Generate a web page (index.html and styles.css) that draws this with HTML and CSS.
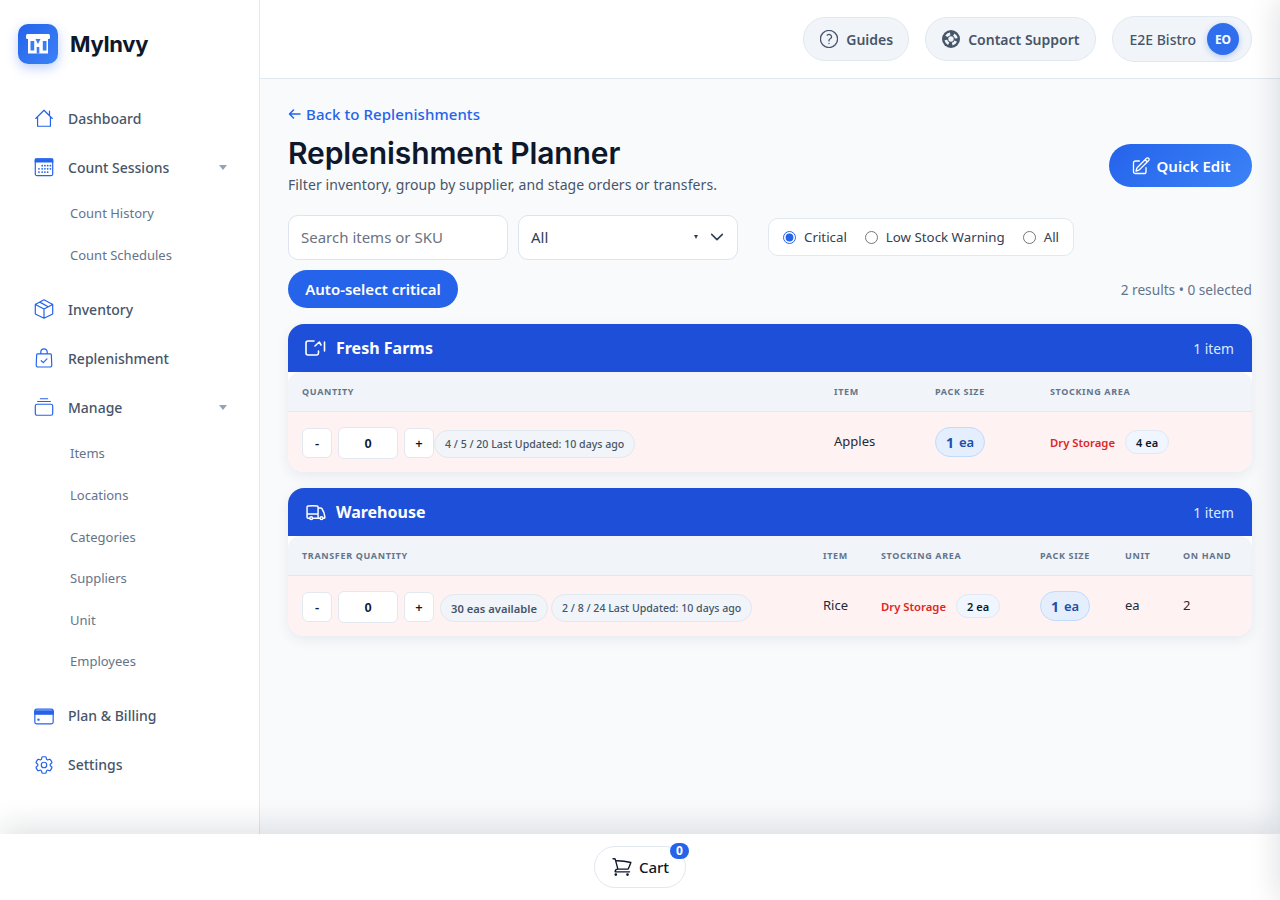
FILE: index.html
```html
<!DOCTYPE html>
<html lang="en">
<head>
  <meta charset="UTF-8">
  <meta name="viewport" content="width=device-width, initial-scale=1.0">
  <title>Replenishment Planner - MyInvy</title>
  <link rel="stylesheet" href="styles.css">
</head>
<body>
  <div class="app">
    <aside class="sidebar">
      <div class="brand">
        <div class="brand-logo">
          <svg width="26" height="22" viewBox="0 0 26 22">
            <rect x="1" y="1" width="24" height="5" rx="1.500" fill="#fff"/>
            <path d="M3 5h20v15.500H3z" fill="#fff"/>
            <path d="M5.500 8h3.700v9.500H5.500zM17.800 8h3.700v9.500h-3.700zM10.500 6h5L13 11zM11.700 14h2.600v6.500h-2.600z" fill="#3b7cf5"/>
          </svg>
        </div>
        <span class="brand-name">MyInvy</span>
      </div>

      <nav class="nav">
        <a class="nav-item">
          <svg class="nav-icon" viewBox="0 0 24 24"><path d="M3 12.500 12 3.500l9 9M5 10.500V21h14V10.500M18 4.500v5"/></svg>
          Dashboard
        </a>
        <a class="nav-item">
          <svg class="nav-icon" viewBox="0 0 24 24">
            <rect x="2.500" y="3" width="19" height="18.500" rx="2"/>
            <path d="M2.500 3.500h19v3h-19z" fill="#2563eb"/>
            <path class="dots" d="M10 10.500h.01M13 10.500h.01M16 10.500h.01M19 10.500h.01M6.500 14h.01M10 14h.01M13 14h.01M16 14h.01M19 14h.01M6.500 17.500h.01M10 17.500h.01M13 17.500h.01M16 17.500h.01"/>
          </svg>
          Count Sessions
          <span class="caret"></span>
        </a>
        <div class="subnav">
          <a class="sub-item">Count History</a>
          <a class="sub-item">Count Schedules</a>
        </div>
        <a class="nav-item">
          <svg class="nav-icon" viewBox="0 0 24 24"><path d="m21.500 7-9.500-5L2.500 7m19 0-9.500 5m9.500-5v10.500l-9.500 4.500m-9.500-15 9.500 5m-9.500-5v10.500l9.500 4.500m0-10v10M7.500 4.500l9 5"/></svg>
          Inventory
        </a>
        <a class="nav-item">
          <svg class="nav-icon" viewBox="0 0 24 24"><path d="M8.500 7.500V5.500a3.500 3.500 0 0 1 7 0v2M5 7.500h14a1 1 0 0 1 1 1l.5 11.500a1.800 1.800 0 0 1-1.800 1.800H5.300A1.800 1.800 0 0 1 3.500 20L4 8.500a1 1 0 0 1 1-1ZM9 15l2.200 2 4-4"/></svg>
          Replenishment
        </a>
        <a class="nav-item">
          <svg class="nav-icon" viewBox="0 0 24 24"><rect x="2.500" y="9" width="19" height="12" rx="2"/><path d="M5 6h14M8 3h8"/></svg>
          Manage
          <span class="caret"></span>
        </a>
        <div class="subnav">
          <a class="sub-item">Items</a>
          <a class="sub-item">Locations</a>
          <a class="sub-item">Categories</a>
          <a class="sub-item">Suppliers</a>
          <a class="sub-item">Unit</a>
          <a class="sub-item">Employees</a>
        </div>
        <a class="nav-item">
          <svg class="nav-icon" viewBox="0 0 24 24">
            <rect x="2" y="4.500" width="20" height="16" rx="2"/>
            <path d="M2 6.500h20v3.500H2z" fill="#2563eb"/>
            <circle cx="6" cy="16" r="1.300" fill="#2563eb" stroke="none"/>
          </svg>
          Plan &amp; Billing
        </a>
        <a class="nav-item">
          <svg class="nav-icon" viewBox="0 0 24 24"><path d="M9.594 3.940c.09-.542.56-.94 1.110-.94h2.593c.55 0 1.020.398 1.110.94l.213 1.281c.063.374.313.686.645.870.074.040.147.083.22.127.325.196.72.257 1.075.124l1.217-.456a1.125 1.125 0 0 1 1.370.49l1.296 2.247a1.125 1.125 0 0 1-.26 1.431l-1.003.827c-.293.241-.438.613-.43.992a7.723 7.723 0 0 1 0 .255c-.008.378.137.75.43.991l1.004.827c.424.35.534.955.26 1.430l-1.298 2.247a1.125 1.125 0 0 1-1.369.491l-1.217-.456c-.355-.133-.75-.072-1.076.124a6.470 6.470 0 0 1-.22.128c-.331.183-.581.495-.644.869l-.213 1.281c-.09.543-.56.94-1.110.94h-2.594c-.55 0-1.019-.398-1.110-.94l-.213-1.281c-.062-.374-.312-.686-.644-.87a6.520 6.520 0 0 1-.22-.127c-.325-.196-.72-.257-1.076-.124l-1.217.456a1.125 1.125 0 0 1-1.369-.49l-1.297-2.247a1.125 1.125 0 0 1 .26-1.431l1.004-.827c.292-.24.437-.613.43-.991a6.932 6.932 0 0 1 0-.255c.007-.38-.138-.751-.43-.992l-1.004-.827a1.125 1.125 0 0 1-.26-1.430l1.297-2.247a1.125 1.125 0 0 1 1.370-.491l1.216.456c.356.133.751.072 1.076-.124.072-.044.146-.086.22-.128.332-.183.582-.495.644-.869l.214-1.280Z"/><path d="M15 12a3 3 0 1 1-6 0 3 3 0 0 1 6 0Z"/></svg>
          Settings
        </a>
      </nav>
    </aside>

    <div class="content">
      <header class="topbar">
        <button class="top-btn guides-btn">
          <svg class="top-icon" viewBox="1.500 1.500 21 21"><path d="M9.879 7.519c1.171-1.025 3.071-1.025 4.242 0 1.172 1.025 1.172 2.687 0 3.712-.203.179-.43.326-.67.442-.745.361-1.450.999-1.450 1.827v.75M22 12a10 10 0 1 1-20 0 10 10 0 0 1 20 0Zm-10 5.250h.008v.008H12v-.008Z"/></svg>
          Guides
        </button>
        <button class="top-btn">
          <svg class="top-icon" viewBox="0 0 24 24">
            <circle cx="12" cy="12" r="12" fill="#475569" stroke="none"/>
            <circle cx="12" cy="12" r="3.600" fill="#f1f5f9" stroke="none"/>
            <circle class="buoy" cx="12" cy="12" r="7"/>
          </svg>
          Contact Support
        </button>
        <div class="account">
          <span>E2E Bistro</span>
          <span class="avatar">EO</span>
        </div>
      </header>

      <main class="main">
        <a class="back-link">
          <svg width="13" height="12" viewBox="0 0 13 12"><path d="M12 6H1.500M5.500 2l-4 4 4 4"/></svg>
          Back to Replenishments
        </a>
        <div class="page-head">
          <div>
            <h1>Replenishment Planner</h1>
            <p class="page-sub">Filter inventory, group by supplier, and stage orders or transfers.</p>
          </div>
          <button class="quick-edit">
            <svg width="20" height="20" viewBox="0 0 24 24" class="stroke-white"><path d="m16.862 4.487 1.687-1.688a1.875 1.875 0 1 1 2.652 2.652L10.582 16.070a4.500 4.500 0 0 1-1.897 1.130L6 18l.8-2.685a4.500 4.500 0 0 1 1.130-1.897l8.932-8.931Zm0 0L19.500 7.125M18 14v4.750A2.250 2.250 0 0 1 15.750 21H5.250A2.250 2.250 0 0 1 3 18.750V8.250A2.250 2.250 0 0 1 5.250 6H10"/></svg>
            Quick Edit
          </button>
        </div>

        <div class="filters">
          <input class="search" type="text" placeholder="Search items or SKU">
          <div class="select">
            <span>All</span>
            <span class="select-arrows">
              <span class="mini-arrow"></span>
              <svg width="16" height="16" viewBox="0 0 24 24"><path d="m4 8 8 8 8-8"/></svg>
            </span>
          </div>
          <div class="radios">
            <label><input type="radio" name="level" checked> Critical</label>
            <label><input type="radio" name="level"> Low Stock Warning</label>
            <label><input type="radio" name="level"> All</label>
          </div>
        </div>

        <div class="actions">
          <button class="auto-select">Auto-select critical</button>
          <span class="results">2 results &bull; 0 selected</span>
        </div>

        <section class="group">
          <div class="group-head">
            <div class="group-title">
              <svg width="22" height="18" viewBox="0 0 22 18" class="stroke-white"><path d="M9 2H3a2 2 0 0 0-2 2v10a2 2 0 0 0 2 2h9a2 2 0 0 0 1.500-2v-2M10 7l4.300-4 1.700 3M19.500 3v9"/></svg>
              Fresh Farms
            </div>
            <span class="group-count">1 item</span>
          </div>
          <div class="thead cols-supplier">
            <span>Quantity</span>
            <span>Item</span>
            <span>Pack Size</span>
            <span>Stocking Area</span>
          </div>
          <div class="row cols-supplier">
            <div class="qty">
              <button class="qty-btn">-</button>
              <input class="qty-input" type="text" value="0">
              <button class="qty-btn">+</button>
              <span class="chip">4 / 5 / 20 Last Updated: 10 days ago</span>
            </div>
            <div class="cell-text">Apples</div>
            <div><span class="pack"><b>1</b> ea</span></div>
            <div class="area">
              <span class="area-name">Dry Storage</span>
              <span class="area-qty">4 ea</span>
            </div>
          </div>
        </section>

        <section class="group">
          <div class="group-head">
            <div class="group-title">
              <svg width="22" height="22" viewBox="0 0 24 24" class="stroke-white"><path d="M8.250 18.750a1.500 1.500 0 0 1-3 0m3 0a1.500 1.500 0 0 0-3 0m3 0h6m-9 0H3.375a1.125 1.125 0 0 1-1.125-1.125V14.250m17.250 4.500a1.500 1.500 0 0 1-3 0m3 0a1.500 1.500 0 0 0-3 0m3 0h1.125c.621 0 1.129-.504 1.090-1.124a17.902 17.902 0 0 0-3.213-9.193 2.056 2.056 0 0 0-1.580-.86H14.250M16.500 18.750h-2.250m0-11.177v-.958c0-.568-.422-1.048-.987-1.106a48.554 48.554 0 0 0-10.026 0 1.106 1.106 0 0 0-.987 1.106v7.635m12-6.677v6.677m0 4.500v-4.500m0 0h-12"/></svg>
              Warehouse
            </div>
            <span class="group-count">1 item</span>
          </div>
          <div class="thead cols-transfer">
            <span>Transfer Quantity</span>
            <span>Item</span>
            <span>Stocking Area</span>
            <span>Pack Size</span>
            <span>Unit</span>
            <span>On Hand</span>
          </div>
          <div class="row cols-transfer">
            <div class="qty">
              <button class="qty-btn">-</button>
              <input class="qty-input" type="text" value="0">
              <button class="qty-btn">+</button>
              <span class="chip chip-first">30 eas available</span>
              <span class="chip">2 / 8 / 24 Last Updated: 10 days ago</span>
            </div>
            <div class="cell-text">Rice</div>
            <div class="area">
              <span class="area-name">Dry Storage</span>
              <span class="area-qty">2 ea</span>
            </div>
            <div><span class="pack"><b>1</b> ea</span></div>
            <div class="cell-text">ea</div>
            <div class="cell-text">2</div>
          </div>
        </section>
      </main>
    </div>
  </div>

  <footer class="cart-bar">
    <button class="cart">
      <svg width="24" height="24" viewBox="0 0 24 24"><path d="M2.250 3h1.386c.51 0 .955.343 1.087.835l.383 1.437M7.500 14.250a3 3 0 0 0-3 3h15.750m-12.750-3h11.218c1.121-2.300 2.100-4.684 2.924-7.138a60.114 60.114 0 0 0-16.536-1.840M7.500 14.250 5.106 5.272M6 20.250a.75.75 0 1 1-1.500 0 .75.75 0 0 1 1.500 0Zm12.750 0a.75.75 0 1 1-1.500 0 .75.75 0 0 1 1.500 0Z"/></svg>
      Cart
      <span class="cart-badge">0</span>
    </button>
  </footer>

  <div class="drawer"></div>
</body>
</html>
```

FILE: styles.css
```css
* {
  margin: 0;
  padding: 0;
  box-sizing: border-box;
}

body {
  font-family: "Noto Sans", "Open Sans", sans-serif;
  background: #f8fafc;
  color: #0f172a;
  height: 900px;
  overflow: hidden;
  display: flex;
  flex-direction: column;
}

button {
  font-family: inherit;
  cursor: pointer;
}

svg {
  fill: none;
  stroke-linecap: round;
  stroke-linejoin: round;
}

.stroke-white {
  stroke: #fff;
  stroke-width: 1.6;
}

.app {
  display: flex;
  height: 834px;
}

/* sidebar */
.sidebar {
  width: 260px;
  flex-shrink: 0;
  background: #fff;
  border-right: 1px solid #e2e8f0;
}

.brand {
  display: flex;
  align-items: flex-start;
  gap: 12px;
  padding: 24px 18px 0;
  height: 94px;
}

.brand-logo {
  width: 40px;
  height: 40px;
  border-radius: 10px;
  background: linear-gradient(135deg, #2563eb, #3b82f6);
  box-shadow: 0 4px 12px rgba(37, 99, 235, 0.3);
  display: flex;
  align-items: center;
  justify-content: center;
}

.brand-name {
  font-family: Inter, sans-serif;
  font-size: 22px;
  font-weight: 700;
  line-height: 40px;
  letter-spacing: -0.3px;
}

.nav {
  padding-top: 0.5px;
}

.nav-item {
  display: flex;
  align-items: center;
  height: 49px;
  padding: 0 32px 2px 33px;
  font-size: 14px;
  font-weight: 500;
  color: #475569;
}

.nav-icon {
  width: 22px;
  height: 22px;
  margin-right: 13px;
  stroke: #2563eb;
  stroke-width: 1.3;
  flex-shrink: 0;
}

.nav-icon .dots {
  stroke-width: 2;
}

.caret {
  margin-left: auto;
  width: 0;
  height: 0;
  border-left: 4px solid transparent;
  border-right: 4px solid transparent;
  border-top: 5px solid #94a3b8;
}

.subnav {
  margin-bottom: 10px;
}

.sub-item {
  display: flex;
  align-items: center;
  height: 41.6px;
  padding-left: 70px;
  font-size: 13px;
  color: #64748b;
}

/* top bar */
.content {
  flex: 1;
  min-width: 0;
}

.topbar {
  height: 79px;
  background: #fff;
  border-bottom: 1px solid #e2e8f0;
  display: flex;
  align-items: center;
  justify-content: flex-end;
  gap: 16px;
  padding: 0 28px 0;
}

.top-btn {
  height: 44px;
  display: flex;
  align-items: center;
  gap: 8px;
  padding: 0 16px;
  background: #f1f5f9;
  border: 1px solid #e2e8f0;
  border-radius: 22px;
  font-size: 14px;
  font-weight: 600;
  color: #475569;
}

.guides-btn {
  padding-right: 15px;
}

.top-icon {
  width: 18px;
  height: 18px;
  stroke: #475569;
  stroke-width: 1.5;
}

.buoy {
  stroke: #f1f5f9;
  stroke-width: 3.6;
  stroke-linecap: butt;
  stroke-dasharray: 6 5;
  stroke-dashoffset: 8;
}

.account {
  height: 46px;
  display: flex;
  align-items: center;
  gap: 11px;
  padding: 0 12px 0 16px;
  background: #f1f5f9;
  border: 1px solid #e2e8f0;
  border-radius: 23px;
  font-size: 14px;
  font-weight: 500;
  color: #475569;
}

.avatar {
  width: 32px;
  height: 32px;
  border-radius: 50%;
  background: #2f6fed;
  box-shadow: 0 2px 6px rgba(37, 99, 235, 0.3);
  color: #fff;
  font-size: 12px;
  font-weight: 700;
  display: flex;
  align-items: center;
  justify-content: center;
}

/* main */
.main {
  padding: 25px 28px 0;
}

.back-link {
  display: flex;
  align-items: center;
  gap: 5px;
  font-size: 15px;
  font-weight: 500;
  line-height: 20px;
  letter-spacing: 0.08px;
  color: #2563eb;
}

.back-link svg {
  stroke: #2563eb;
  stroke-width: 1.5;
}

.page-head {
  display: flex;
  justify-content: space-between;
  align-items: center;
  margin-top: 10px;
}

h1 {
  font-family: Inter, sans-serif;
  font-size: 30px;
  font-weight: 600;
  line-height: 38px;
  letter-spacing: -0.1px;
}

.page-sub {
  font-size: 14px;
  line-height: 20px;
  letter-spacing: 0.09px;
  color: #475569;
  margin-top: 3px;
}

.quick-edit {
  width: 143px;
  height: 43px;
  margin-top: 2px;
  display: flex;
  align-items: center;
  justify-content: center;
  gap: 6px;
  border: none;
  border-radius: 22px;
  background: linear-gradient(135deg, #2563eb, #3b82f6);
  color: #fff;
  font-size: 15px;
  font-weight: 600;
}

.filters {
  display: flex;
  align-items: flex-start;
  gap: 10px;
  margin-top: 20px;
}

.search,
.select {
  width: 220px;
  height: 45px;
  background: #fff;
  border: 1px solid #dde3f0;
  border-radius: 10px;
  padding: 0 12px 2px;
  font-family: inherit;
  font-size: 15px;
  color: #334155;
}

.search::placeholder {
  color: #6b7280;
  opacity: 1;
}

.select {
  display: flex;
  align-items: center;
  justify-content: space-between;
}

.select-arrows {
  display: flex;
  align-items: center;
  gap: 11px;
}

.select-arrows svg {
  stroke: #334155;
  stroke-width: 2.4;
}

.mini-arrow {
  width: 0;
  height: 0;
  border-left: 2px solid transparent;
  border-right: 2px solid transparent;
  border-top: 4px solid #334155;
}

.radios {
  display: flex;
  align-items: center;
  gap: 18px;
  height: 38px;
  margin: 3px 0 0 20px;
  padding: 0 14px;
  background: #fff;
  border: 1px solid #e2e8f0;
  border-radius: 10px;
  font-size: 13.3px;
  color: #334155;
}

.radios label {
  display: flex;
  align-items: center;
  gap: 8px;
}

.radios input {
  width: 13px;
  height: 13px;
  margin: 0;
  accent-color: #2563eb;
}

.actions {
  display: flex;
  align-items: center;
  justify-content: space-between;
  margin-top: 10px;
}

.auto-select {
  width: 170px;
  height: 38px;
  border: none;
  border-radius: 19px;
  background: #2563eb;
  color: #fff;
  font-size: 15px;
  font-weight: 600;
}

.results {
  font-size: 13.7px;
  color: #64748b;
}

/* supplier groups */
.group {
  margin-top: 16px;
  background: #fff;
  border-radius: 16px;
  box-shadow: 0 4px 14px rgba(15, 23, 42, 0.07);
}

.group-head {
  height: 48px;
  display: flex;
  align-items: center;
  justify-content: space-between;
  padding: 0 18px 0 17px;
  background: #1d4fd8;
  border-radius: 16px 16px 0 0;
  color: #fff;
}

.group-title {
  display: flex;
  align-items: center;
  gap: 9px;
  font-size: 16px;
  font-weight: 700;
}

.group-count {
  font-size: 13.8px;
  color: #dbeafe;
}

.thead {
  height: 40px;
  align-items: center;
  background: #f1f5f9;
  border-bottom: 1px solid #e2e8f0;
  border-radius: 12px 12px 0 0;
  font-size: 9px;
  font-weight: 700;
  letter-spacing: 0.65px;
  text-transform: uppercase;
  color: #64748b;
}

.row {
  height: 60px;
  align-items: center;
  background: #fef2f2;
  border-radius: 0 0 16px 16px;
}

.cols-supplier,
.cols-transfer {
  display: grid;
  padding: 0 14px;
}

.cols-supplier {
  grid-template-columns: 532px 101px 115px 1fr;
}

.cols-transfer {
  grid-template-columns: 521px 58px 159px 85px 58px 1fr;
}

.qty {
  display: flex;
  align-items: center;
  margin-top: 2px;
}

.qty-btn {
  width: 30px;
  height: 30px;
  background: #fff;
  border: 1px solid #e2e8f0;
  border-radius: 6px;
  font-size: 13px;
  font-weight: 600;
  color: #0f172a;
}

.qty-input {
  width: 60px;
  height: 32px;
  margin: 0 6px;
  background: #fff;
  border: 1px solid #e2e8f0;
  border-radius: 6px;
  text-align: center;
  font-family: "Liberation Sans", sans-serif;
  font-size: 13px;
  font-weight: 700;
  color: #0f172a;
}

.chip {
  height: 28px;
  margin-top: 2px;
  display: inline-flex;
  align-items: center;
  padding: 0 10px;
  background: #f1f5f9;
  border: 1px solid #e2e8f0;
  border-radius: 14px;
  font-size: 10.6px;
  font-weight: 500;
  color: #475569;
  white-space: nowrap;
}

.chip-first {
  margin-left: 6px;
  margin-right: 3px;
  font-size: 11.2px;
  font-weight: 600;
}

.cell-text {
  font-size: 13px;
  padding-bottom: 2px;
  color: #1e293b;
}

.pack {
  display: inline-flex;
  align-items: center;
  gap: 5px;
  height: 30px;
  padding: 0 10px;
  background: #e4eefd;
  border: 1px solid #bfdbfe;
  border-radius: 15px;
  font-size: 13px;
  font-weight: 600;
  color: #1e4fa8;
}

.pack b {
  font-size: 14px;
  font-weight: 700;
}

.area {
  display: flex;
  align-items: center;
  gap: 10px;
}

.area-name {
  font-size: 11.3px;
  font-weight: 600;
  color: #dc2626;
}

.area-qty {
  height: 24px;
  display: inline-flex;
  align-items: center;
  padding: 0 10px;
  background: #eff6ff;
  border: 1px solid #e2e8f0;
  border-radius: 12px;
  font-size: 11px;
  font-weight: 600;
  color: #0f172a;
}

/* cart bar */
.cart-bar {
  position: relative;
  height: 66px;
  background: #fff;
  box-shadow: 0 -8px 30px rgba(15, 23, 42, 0.12);
  display: flex;
  align-items: center;
  justify-content: center;
}

.cart {
  position: relative;
  width: 92px;
  height: 42px;
  display: flex;
  align-items: center;
  justify-content: center;
  gap: 6px;
  background: #fff;
  border: 1px solid #e2e8f0;
  border-radius: 21px;
  font-size: 15px;
  font-weight: 500;
  color: #0f172a;
}

.cart svg {
  width: 22px;
  height: 22px;
  stroke: #0f172a;
  stroke-width: 1.5;
}

.cart-badge {
  position: absolute;
  top: -4px;
  right: -4px;
  min-width: 19px;
  height: 16px;
  border-radius: 8px;
  background: #2563eb;
  color: #fff;
  font-size: 12px;
  font-weight: 700;
  line-height: 16px;
  text-align: center;
}

/* closed side drawer casting its shadow from off screen */
.drawer {
  position: fixed;
  top: 0;
  left: 1280px;
  width: 300px;
  height: 100%;
  box-shadow: 0 0 30px rgba(15, 23, 42, 0.15);
}
```
